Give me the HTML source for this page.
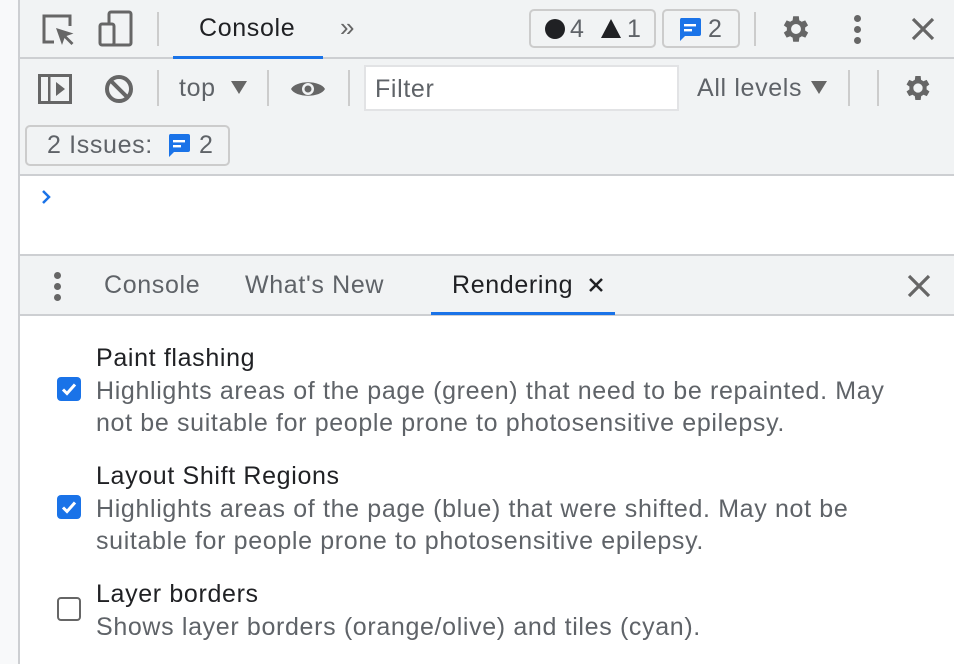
<!DOCTYPE html>
<html><head><meta charset="utf-8"><style>
*{margin:0;padding:0;box-sizing:border-box}
body{width:954px;height:664px;overflow:hidden;background:#fff;font-family:"Liberation Sans",sans-serif;position:relative;color:#202124}
.a{position:absolute;white-space:nowrap}
.t{font-size:25px !important;letter-spacing:0.65px}
.g{color:#5f6368}
.vs{position:absolute;width:2px;background:#ccc}
</style></head><body>
<div class="a" style="left:0;top:0;width:20px;height:664px;background:#f8f9fa;border-right:2px solid #cdcfd2"></div>
<div class="a" style="left:20px;top:0;width:934px;height:176px;background:#f1f3f4;border-bottom:2px solid #cdcfd2"></div>
<div class="a" style="left:20px;top:57px;width:934px;height:2px;background:#cdcfd2"></div>
<svg class="a" style="left:40px;top:12px" width="36" height="36" viewBox="0 0 36 36"><path d="M14 30H4V4h26v10" fill="none" stroke="#666" stroke-width="3"/><path d="M16 16l6 17 2.5-7 7 7 2-2-7-7 7-2.5z" fill="#666"/></svg>
<svg class="a" style="left:98px;top:10px" width="36" height="38" viewBox="0 0 36 38"><rect x="11" y="2" width="22" height="33" rx="2" fill="none" stroke="#666" stroke-width="3"/><rect x="2" y="14" width="14" height="21" rx="2" fill="#f1f3f4" stroke="#666" stroke-width="3"/></svg>
<div class="vs" style="left:157px;top:12px;height:34px"></div>
<div class="a t" style="left:199px;top:14px;color:#202124">Console</div>
<div class="a" style="left:173px;top:56px;width:150px;height:3px;background:#1a73e8"></div>
<div class="a" style="left:340px;top:12px;font-size:26px;color:#666">»</div>
<div class="a" style="left:529px;top:9px;width:127px;height:39px;border:2px solid #ccc;border-radius:5px"></div>
<div class="a" style="left:545px;top:19px;width:20px;height:20px;border-radius:50%;background:#202124"></div>
<div class="a g t" style="left:570px;top:15px">4</div>
<svg class="a" style="left:600px;top:18px" width="22" height="21"><path d="M11 1L21 20H1z" fill="#202124"/></svg>
<div class="a g t" style="left:627px;top:15px">1</div>
<div class="a" style="left:662px;top:9px;width:78px;height:39px;border:2px solid #ccc;border-radius:5px"></div>
<svg class="a" style="left:678px;top:17px" width="24" height="25" viewBox="0 0 24 25"><path d="M3 1h18a2 2 0 0 1 2 2v14a2 2 0 0 1-2 2H7l-5 5V3a2 2 0 0 1 1-2z" fill="#1a73e8"/><rect x="6" y="7" width="12" height="2.4" fill="#fff"/><rect x="6" y="12" width="8" height="2.4" fill="#fff"/></svg>
<div class="a g t" style="left:708px;top:15px">2</div>
<div class="vs" style="left:754px;top:12px;height:34px"></div>
<svg class="a" style="left:779px;top:12px" width="34" height="34" viewBox="0 0 24 24"><path fill="#666" d="M19.4 13a7.5 7.5 0 0 0 0-2l2.1-1.6-2-3.5-2.5 1a7 7 0 0 0-1.7-1L15 3h-4l-.4 2.9a7 7 0 0 0-1.7 1l-2.5-1-2 3.5L6.6 11a7.5 7.5 0 0 0 0 2l-2.2 1.6 2 3.5 2.5-1a7 7 0 0 0 1.7 1L11 21h4l.4-2.9a7 7 0 0 0 1.7-1l2.5 1 2-3.5zM13 15.5a3.5 3.5 0 1 1 0-7 3.5 3.5 0 0 1 0 7z" transform="translate(-1 0)"/></svg>
<div class="a" style="left:854px;top:15px;width:7px;height:7px;border-radius:50%;background:#666;box-shadow:0 11px 0 #666,0 22px 0 #666"></div>
<svg class="a" style="left:910px;top:16px" width="26" height="26"><path d="M3 3l20 20M23 3L3 23" stroke="#666" stroke-width="3.2"/></svg>
<svg class="a" style="left:38px;top:74px" width="34" height="30" viewBox="0 0 34 30"><rect x="1.5" y="1.5" width="31" height="27" fill="none" stroke="#666" stroke-width="3"/><rect x="10" y="1.5" width="2.5" height="27" fill="#666"/><path d="M18 8l9 7-9 7z" fill="#666"/></svg>
<svg class="a" style="left:104px;top:74px" width="30" height="30"><circle cx="15" cy="15" r="12" fill="none" stroke="#666" stroke-width="4"/><path d="M7 7l16 16" stroke="#666" stroke-width="4"/></svg>
<div class="vs" style="left:157px;top:70px;height:36px"></div>
<div class="a g t" style="left:179px;top:74px">top</div>
<svg class="a" style="left:231px;top:81px" width="16" height="13"><path d="M0 0h16L8 13z" fill="#666"/></svg>
<div class="vs" style="left:267px;top:70px;height:36px"></div>
<svg class="a" style="left:290px;top:78px" width="36" height="22" viewBox="0 0 36 22"><path d="M1 11C6 2 30 2 35 11C30 20 6 20 1 11z" fill="#666"/><circle cx="18" cy="11" r="6" fill="#f1f3f4"/><circle cx="18" cy="11" r="3.5" fill="#666"/></svg>
<div class="vs" style="left:348px;top:70px;height:36px"></div>
<div class="a" style="left:364px;top:65px;width:315px;height:46px;background:#fff;border:2px solid #e2e3e5"></div>
<div class="a g t" style="left:375px;top:75px">Filter</div>
<div class="a g t" style="left:697px;top:74px">All levels</div>
<svg class="a" style="left:811px;top:81px" width="16" height="13"><path d="M0 0h16L8 13z" fill="#666"/></svg>
<div class="vs" style="left:848px;top:70px;height:36px"></div>
<div class="vs" style="left:877px;top:70px;height:36px"></div>
<svg class="a" style="left:902px;top:72px" width="32" height="32" viewBox="0 0 24 24"><path fill="#666" d="M19.4 13a7.5 7.5 0 0 0 0-2l2.1-1.6-2-3.5-2.5 1a7 7 0 0 0-1.7-1L15 3h-4l-.4 2.9a7 7 0 0 0-1.7 1l-2.5-1-2 3.5L6.6 11a7.5 7.5 0 0 0 0 2l-2.2 1.6 2 3.5 2.5-1a7 7 0 0 0 1.7 1L11 21h4l.4-2.9a7 7 0 0 0 1.7-1l2.5 1 2-3.5zM13 15.5a3.5 3.5 0 1 1 0-7 3.5 3.5 0 0 1 0 7z" transform="translate(-1 0)"/></svg>
<div class="a" style="left:25px;top:125px;width:205px;height:41px;border:2px solid #ccc;border-radius:5px"></div>
<div class="a g t" style="left:47px;top:131px">2 Issues:</div>
<svg class="a" style="left:167px;top:133px" width="24" height="25" viewBox="0 0 24 25"><path d="M3 1h18a2 2 0 0 1 2 2v14a2 2 0 0 1-2 2H7l-5 5V3a2 2 0 0 1 1-2z" fill="#1a73e8"/><rect x="6" y="7" width="12" height="2.4" fill="#fff"/><rect x="6" y="12" width="8" height="2.4" fill="#fff"/></svg>
<div class="a g t" style="left:199px;top:131px">2</div>
<svg class="a" style="left:41px;top:189px" width="12" height="16"><path d="M2 2l6 6-6 6" fill="none" stroke="#1a73e8" stroke-width="2.5"/></svg>
<div class="a" style="left:20px;top:254px;width:934px;height:62px;background:#f1f3f4;border-top:2px solid #cdcfd2;border-bottom:2px solid #cdcfd2"></div>
<div class="a" style="left:54px;top:272px;width:7px;height:7px;border-radius:50%;background:#666;box-shadow:0 11px 0 #666,0 22px 0 #666"></div>
<div class="a g t" style="left:104px;top:271px">Console</div>
<div class="a g t" style="left:245px;top:271px">What's New</div>
<div class="a t" style="left:452px;top:271px;color:#202124">Rendering</div>
<svg class="a" style="left:588px;top:277px" width="16" height="16"><path d="M2 2l12 12M14 2L2 14" stroke="#202124" stroke-width="2.5"/></svg>
<div class="a" style="left:431px;top:312px;width:184px;height:3px;background:#1a73e8"></div>
<svg class="a" style="left:906px;top:273px" width="26" height="26"><path d="M3 3l20 20M23 3L3 23" stroke="#666" stroke-width="3.2"/></svg>
<div class="a t" style="left:96px;top:344px">Paint flashing</div>
<div class="a g t" style="left:96px;top:375px;line-height:32px">Highlights areas of the page (green) that need to be repainted. May<br>not be suitable for people prone to photosensitive epilepsy.</div>
<svg class="a" style="left:57px;top:377px" width="24" height="24"><rect width="24" height="24" rx="4" fill="#1a73e8"/><path d="M6 12.5l4 4 8-9" fill="none" stroke="#fff" stroke-width="3"/></svg>
<div class="a t" style="left:96px;top:462px">Layout Shift Regions</div>
<div class="a g t" style="left:96px;top:493px;line-height:32px">Highlights areas of the page (blue) that were shifted. May not be<br>suitable for people prone to photosensitive epilepsy.</div>
<svg class="a" style="left:57px;top:495px" width="24" height="24"><rect width="24" height="24" rx="4" fill="#1a73e8"/><path d="M6 12.5l4 4 8-9" fill="none" stroke="#fff" stroke-width="3"/></svg>
<div class="a t" style="left:96px;top:580px">Layer borders</div>
<div class="a g t" style="left:96px;top:611px;line-height:32px">Shows layer borders (orange/olive) and tiles (cyan).</div>
<div class="a" style="left:57px;top:597px;width:24px;height:24px;border:2px solid #666;border-radius:4px"></div>
</body></html>
